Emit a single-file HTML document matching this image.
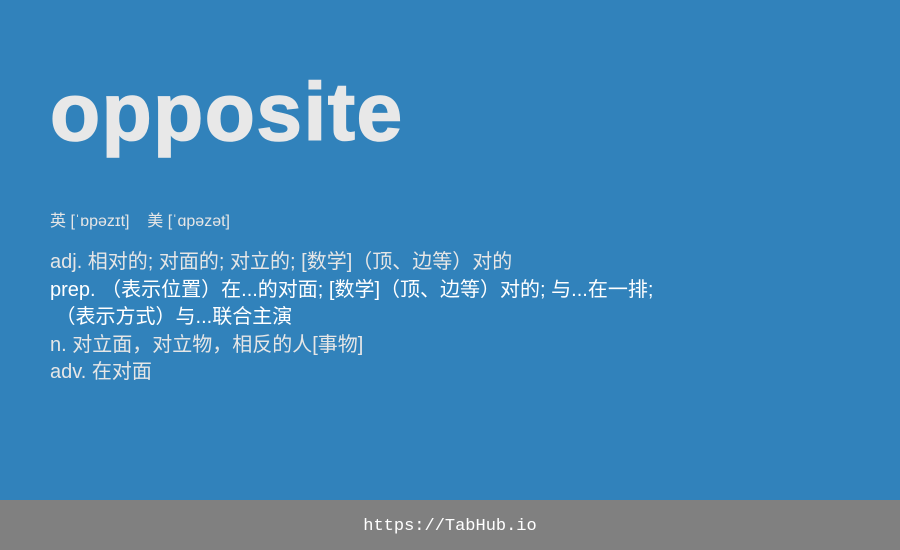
<!DOCTYPE html>
<html><head><meta charset="utf-8"><style>
html,body{margin:0;padding:0;overflow:hidden;height:550px;}
body{width:900px;height:550px;background:#3182bb;position:relative;overflow:hidden;font-family:"Liberation Sans","Noto Sans CJK SC",sans-serif;color:#e6e6e6;}
.t{position:absolute;left:50px;top:68px;font-size:82px;font-weight:bold;line-height:90px;letter-spacing:1.5px;color:#e8e8e8;-webkit-text-stroke:1.5px #e8e8e8;}
.ph{position:absolute;left:50px;top:212px;font-size:16px;line-height:20px;}
.d{position:absolute;left:50px;top:249px;font-size:20px;line-height:27.5px;}
.w{color:#fff;}
.f{position:absolute;left:0;top:500px;width:900px;height:48px;padding-top:2px;background:#808080;color:#fff;font-family:"Liberation Mono",monospace;font-size:17px;line-height:50px;text-align:center;overflow:hidden;}
</style></head><body>
<div class="t">opposite</div>
<div class="ph">英 [ˈɒpəzɪt]&nbsp;&nbsp;&nbsp; 美 [ˈɑpəzət]</div>
<div class="d">
<div>adj. 相对的; 对面的; 对立的; [数学]（顶、边等）对的</div>
<div class="w">prep. （表示位置）在...的对面; [数学]（顶、边等）对的; 与...在一排;</div>
<div class="w">&nbsp;（表示方式）与...联合主演</div>
<div>n. 对立面，对立物，相反的人[事物]</div>
<div>adv. 在对面</div>
</div>
<div class="f">https://TabHub.io</div>
</body></html>
